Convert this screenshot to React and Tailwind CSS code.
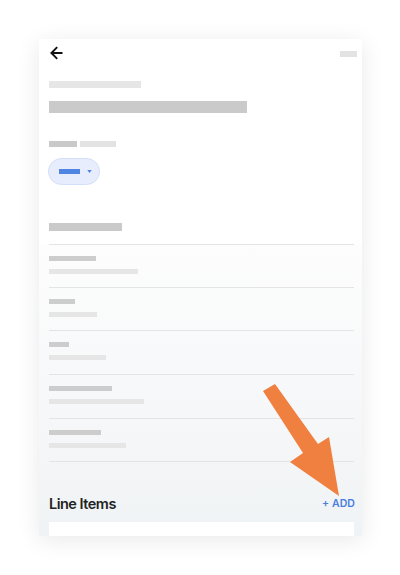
import React from "react";

const rows = [
  { h: "h-[43px]", d: "w-[47px]", l: "w-[89px]" },
  { h: "h-[43px]", d: "w-[26px]", l: "w-[48px]" },
  { h: "h-[44px]", d: "w-[20px]", l: "w-[57px]" },
  { h: "h-[44px]", d: "w-[63px]", l: "w-[95px]" },
  { h: "h-[43px]", d: "w-[52px]", l: "w-[77px]" },
];

export default function App() {
  return (
    <div className="relative w-[400px] h-[575px] bg-white overflow-hidden" style={{ fontFamily: "Inter, 'Liberation Sans', sans-serif" }}>
      <div className="ml-[39px] mt-[39px] w-[323px] h-[497px] bg-white shadow-[0_4px_22px_rgba(0,0,0,0.09)] flex flex-col overflow-hidden">
        <div className="flex justify-between items-start pt-[7px]">
          <svg viewBox="0 0 13 14" className="w-[13px] h-[14px] ml-[11px]" fill="none" stroke="#111" strokeWidth="1.9">
            <path d="M12.5 7H1.8M7.2 1.2 1.4 7l5.8 5.8" />
          </svg>
          <div className="w-[17px] h-[6px] bg-[#e3e3e3] mt-[5px] mr-[5px]" />
        </div>
        <div className="px-[10px] flex flex-col items-start">
          <div className="mt-[21px] w-[92px] h-[7px] bg-[#e6e6e6]" />
          <div className="mt-[13px] w-[198px] h-[12px] bg-[#cacaca]" />
          <div className="mt-[28px] flex gap-[3px]">
            <div className="w-[28px] h-[6px] bg-[#c9c9c9]" />
            <div className="w-[36px] h-[6px] bg-[#e3e3e3]" />
          </div>
          <div className="mt-[11px] -ml-[1px] w-[52px] h-[27px] rounded-full bg-[#e7edfc] border border-[#d3def8] flex items-center pl-[10px] gap-[7px]">
            <div className="w-[21px] h-[5px] bg-[#4f86e3]" />
            <svg viewBox="0 0 6 4" className="w-[5px] h-[3px]" fill="#4f86e3">
              <path d="M0 0h6L3 4z" />
            </svg>
          </div>
          <div className="mt-[38px] w-[73px] h-[8px] bg-[#cacaca]" />
        </div>
        <div className="mt-[13px] flex-1 bg-gradient-to-b from-[#fdfdfd] to-[#f0f3f5] flex flex-col">
          <div className="px-[10px] pr-[8px]">
            {rows.map((r, i) => (
              <div key={i} className={`${r.h} border-t border-[#e4e4e4] pt-[11px] flex flex-col`}>
                <div className={`${r.d} h-[5px] bg-[#cdcdcd]`} />
                <div className={`${r.l} h-[5px] bg-[#e6e6e6] mt-[8px]`} />
              </div>
            ))}
            <div className="border-t border-[#e4e4e4]" />
          </div>
          <div className="mt-[32px] px-[10px] pr-[7px] flex justify-between items-center h-[20px]">
            <span className="text-[14.5px] font-semibold text-[#222] tracking-[-0.5px]">Line Items</span>
            <span className="text-[10.5px] font-semibold text-[#4a7de0] tracking-[0.1px]">+ ADD</span>
          </div>
          <div className="mt-[8px] ml-[10px] mr-[8px] flex-1 bg-white" />
        </div>
      </div>
      <svg className="absolute left-0 top-0 pointer-events-none" width="400" height="575" viewBox="0 0 400 575">
        <polygon points="263,391 275,384 318,444 329,437 339,496 290,462 303,453" fill="#f08040" />
      </svg>
    </div>
  );
}
